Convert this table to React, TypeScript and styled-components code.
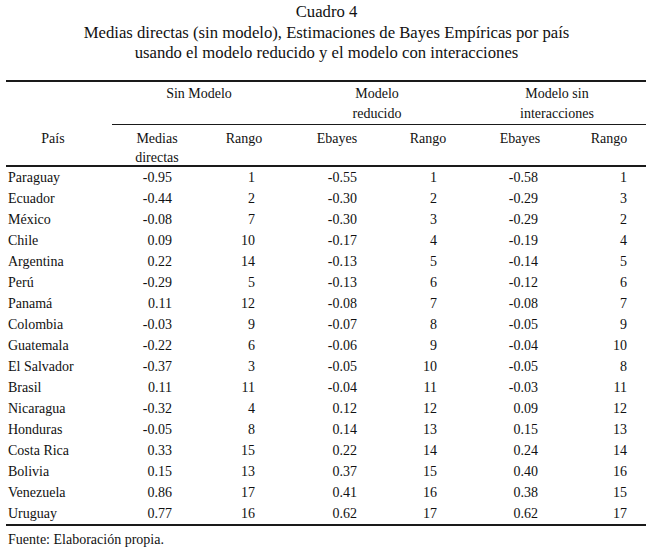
import styled, { createGlobalStyle } from 'styled-components';

type Row = [string, string, string, string, string, string, string];

const ROWS: Row[] = [
  ['Paraguay', '-0.95', '1', '-0.55', '1', '-0.58', '1'],
  ['Ecuador', '-0.44', '2', '-0.30', '2', '-0.29', '3'],
  ['México', '-0.08', '7', '-0.30', '3', '-0.29', '2'],
  ['Chile', '0.09', '10', '-0.17', '4', '-0.19', '4'],
  ['Argentina', '0.22', '14', '-0.13', '5', '-0.14', '5'],
  ['Perú', '-0.29', '5', '-0.13', '6', '-0.12', '6'],
  ['Panamá', '0.11', '12', '-0.08', '7', '-0.08', '7'],
  ['Colombia', '-0.03', '9', '-0.07', '8', '-0.05', '9'],
  ['Guatemala', '-0.22', '6', '-0.06', '9', '-0.04', '10'],
  ['El Salvador', '-0.37', '3', '-0.05', '10', '-0.05', '8'],
  ['Brasil', '0.11', '11', '-0.04', '11', '-0.03', '11'],
  ['Nicaragua', '-0.32', '4', '0.12', '12', '0.09', '12'],
  ['Honduras', '-0.05', '8', '0.14', '13', '0.15', '13'],
  ['Costa Rica', '0.33', '15', '0.22', '14', '0.24', '14'],
  ['Bolivia', '0.15', '13', '0.37', '15', '0.40', '16'],
  ['Venezuela', '0.86', '17', '0.41', '16', '0.38', '15'],
  ['Uruguay', '0.77', '16', '0.62', '17', '0.62', '17'],
];

// right padding of the number in each value column
const PAD_RIGHT = [30, 31, 31, 31, 34, 19];

const App = (): JSX.Element => {
  return (
    <>
      <GlobalStyle />
      <Page>
        <Title>
          <div>Cuadro 4</div>
          <div>Medias directas (sin modelo), Estimaciones de Bayes Empíricas por país</div>
          <div>usando el modelo reducido y el modelo con interacciones</div>
        </Title>

        <Table>
          <GroupRow>
            <span />
            <GroupCell>Sin Modelo</GroupCell>
            <GroupCell>Modelo<br />reducido</GroupCell>
            <GroupCell>Modelo sin<br />interacciones</GroupCell>
          </GroupRow>

          <HeadRow>
            <HeadCell $first>País</HeadCell>
            <HeadCell>Medias<br />directas</HeadCell>
            <HeadCell>Rango</HeadCell>
            <HeadCell>Ebayes</HeadCell>
            <HeadCell>Rango</HeadCell>
            <HeadCell>Ebayes</HeadCell>
            <HeadCell>Rango</HeadCell>
          </HeadRow>

          <Body>
            {ROWS.map(([country, ...values]) => (
              <DataRow key={country}>
                <Country>{country}</Country>
                {values.map((v, i) => (
                  <Value key={i} $pr={PAD_RIGHT[i]}>{v}</Value>
                ))}
              </DataRow>
            ))}
          </Body>
        </Table>

        <Source>Fuente: Elaboración propia.</Source>
      </Page>
    </>
  );
};

export default App;

const GlobalStyle = createGlobalStyle`
  html, body {
    margin: 0;
    padding: 0;
    background: #fff;
  }
`;

const Page = styled.div`
  width: 653px;
  height: 548px;
  overflow: hidden;
  background: #fff;
  color: #111;
  font-family: "Liberation Serif", "Times New Roman", serif;
`;

const Title = styled.div`
  padding-top: 2px;
  font-size: 16.7px;
  line-height: 20.5px;
  text-align: center;
`;

const Table = styled.div`
  width: 640px;
  margin: 16px 0 0 6px;
  border-top: 2px solid #1a1a1a;
  font-size: 14px;
`;

const GRID = '106px 90px 84px 102px 80px 104px 74px';

const GroupRow = styled.div`
  display: grid;
  grid-template-columns: ${GRID};
  padding-top: 2px;
`;

const GroupCell = styled.div`
  grid-column: span 2;
  text-align: center;
  line-height: 20px;
  height: 40px;
  border-bottom: 1px solid #1a1a1a;
`;

const HeadRow = styled.div`
  display: grid;
  grid-template-columns: ${GRID};
  height: 42px;
  padding-top: 4px;
  box-sizing: border-box;
  border-bottom: 2px solid #1a1a1a;
`;

const HeadCell = styled.div<{ $first?: boolean }>`
  text-align: center;
  line-height: 19px;
  padding-right: ${p => (p.$first ? 12 : 0)}px;
`;

const Body = styled.div`
  border-bottom: 2px solid #1a1a1a;
`;

const DataRow = styled.div`
  display: grid;
  grid-template-columns: ${GRID};
  height: 21px;
  line-height: 21px;
`;

const Country = styled.div`
  padding-left: 2px;
  white-space: nowrap;
`;

const Value = styled.div<{ $pr: number }>`
  text-align: right;
  padding-right: ${p => p.$pr}px;
`;

const Source = styled.div`
  padding: 3px 0 0 8px;
  font-size: 14px;
  line-height: 21px;
`;
